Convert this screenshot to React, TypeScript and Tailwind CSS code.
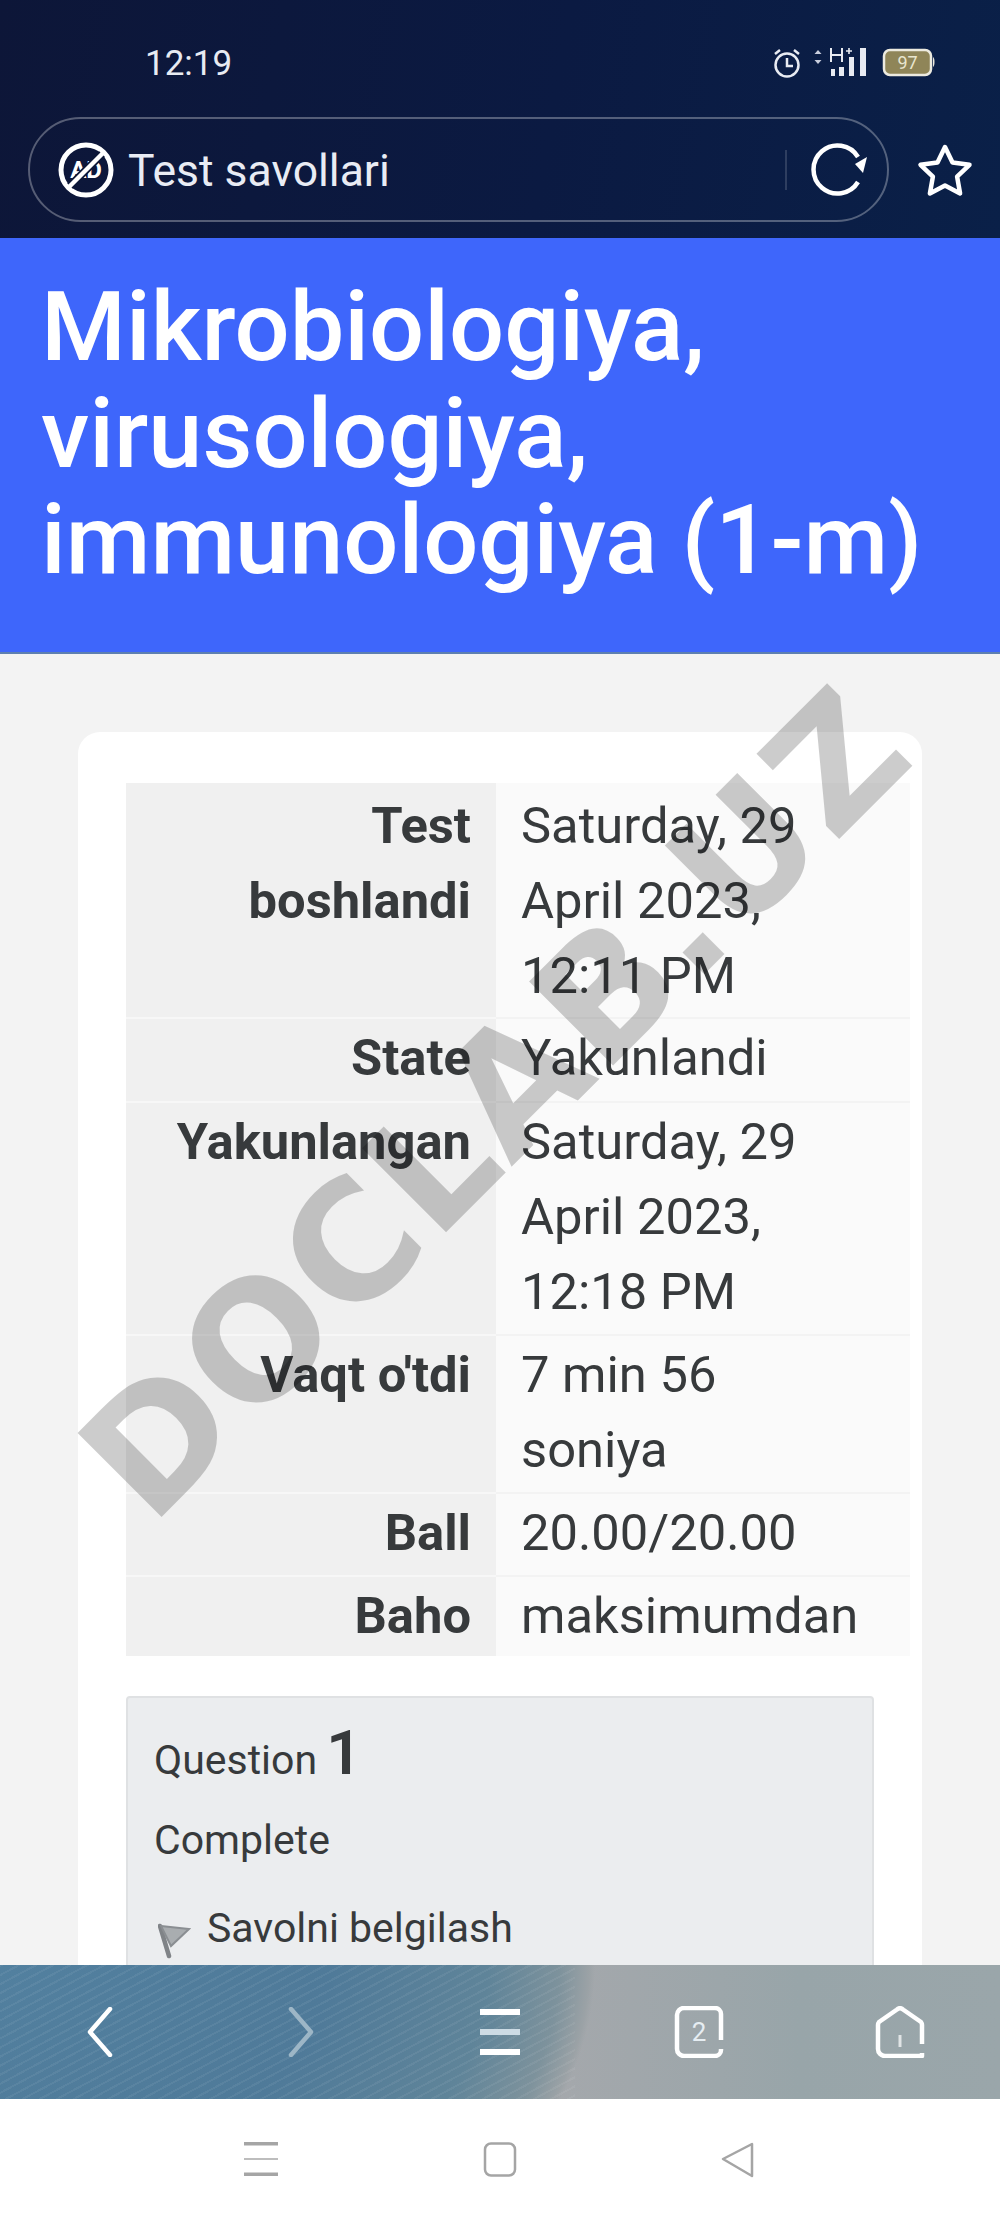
const rows = [
  { label: ['Test', 'boshlandi'], value: ['Saturday, 29', 'April 2023,', '12:11 PM'] },
  { label: ['State'], value: ['Yakunlandi'] },
  { label: ['Yakunlangan'], value: ['Saturday, 29', 'April 2023,', '12:18 PM'] },
  { label: ["Vaqt o'tdi"], value: ['7 min 56', 'soniya'] },
  { label: ['Ball'], value: ['20.00/20.00'] },
  { label: ['Baho'], value: ['maksimumdan'] },
];

function cellPadding(i: number) {
  if (i === 0) return 'pt-[5px] pb-[4px]';
  if (i === 1) return 'pt-[1px] pb-[6px] border-t-2';
  if (i === 2 || i === 3) return 'pt-[1px] pb-[5px] border-t-2';
  if (i === 4) return 'pt-[1px] pb-[5px] border-t-2';
  return 'pt-[1px] pb-[3px] border-t-2';
}

function StatusIcons() {
  return (
    <div className="relative w-[170px] h-[36px]">
      <svg width="170" height="36" viewBox="0 0 170 36" fill="none" className="block">
        {/* alarm */}
        <circle cx="16" cy="18" r="11.5" stroke="#e8ebf2" strokeWidth="2.5" />
        <path d="M16 11v8h6" stroke="#e8ebf2" strokeWidth="2.5" />
        <path d="M4 7l5-4M28 7l-5-4" stroke="#e8ebf2" strokeWidth="2.5" />
        {/* data arrows */}
        <path d="M47 3l3.5 4h-7zM47 17l3.5-4h-7z" fill="#c9cede" />
        {/* H+ */}
        <path d="M60 1v14M71 1v14M60 8h11" stroke="#e8ebf2" strokeWidth="2" />
        <path d="M75 4h6M78 1v6" stroke="#e8ebf2" strokeWidth="1.6" />
        {/* signal */}
        <path d="M60 22h4v7h-4zM68 20h5v9h-5zM78 10h5v19h-5zM89 1h6v28h-6z" fill="#e8ebf2" />
        {/* battery */}
        <rect x="113" y="3" width="47" height="25" rx="6" fill="#8f8558" stroke="#eceadf" strokeWidth="2.5" />
        <path d="M162 10c2 1 2 9 0 10z" fill="#eceadf" />
      </svg>
      <span className="absolute left-[113px] top-[3px] w-[47px] h-[25px] flex items-center justify-center text-[18px] leading-[25px] text-[#e9e6cf]">
        97
      </span>
    </div>
  );
}

function AdBlockIcon() {
  return (
    <div className="relative w-[56px] h-[56px]">
      <span className="absolute inset-0 flex items-center justify-center text-[24px] font-bold text-white">AD</span>
      <svg width="56" height="56" viewBox="0 0 56 56" fill="none" className="absolute inset-0 block">
        <circle cx="28" cy="28" r="25" stroke="#fff" strokeWidth="5" />
        <path d="M44 12L12 44" stroke="#0c1738" strokeWidth="8" />
        <path d="M46 10L10 46" stroke="#fff" strokeWidth="4.500" />
      </svg>
    </div>
  );
}

function ReloadIcon() {
  return (
    <svg width="62" height="54" viewBox="0 0 62 54" fill="none" className="block">
      <path d="M50 39A24 24 0 1 1 50 14" stroke="#fff" strokeWidth="4.500" />
      <path d="M47 21l12-7-4 16z" fill="#fff" />
    </svg>
  );
}

function StarIcon() {
  return (
    <svg width="56" height="54" viewBox="0 0 56 54" fill="none" className="block">
      <path d="M28 4l7.500 15.500 17 2.300-12.400 11.900 3 16.800L28 42.500l-15.100 8 3-16.800L3.500 21.800l17-2.300z" stroke="#fff" strokeWidth="4.500" strokeLinejoin="round" />
    </svg>
  );
}

function FlagIcon() {
  return (
    <svg width="34" height="36" viewBox="0 0 34 36" fill="none" className="block">
      <path d="M2 3l9 30" stroke="#7f8387" strokeWidth="4.500" strokeLinecap="round" />
      <path d="M3 3l28 3-18 17z" fill="#a9adb0" stroke="#8a8e92" strokeWidth="2" />
    </svg>
  );
}

function BottomBar() {
  return (
    <div className="h-[134px] shrink-0 flex items-center [background-repeat:no-repeat] [background-size:575px_100%,100%_100%,100%_100%] bg-[repeating-linear-gradient(152deg,rgba(255,255,255,0.06)_0px,rgba(255,255,255,0.06)_2px,transparent_2px,transparent_8px),radial-gradient(ellipse_595px_400px_at_0px_0px,#52809f_0%,#4f7a99_55%,#5f8499_82%,#7d929c_94%,#9ba2a6_99%,transparent_100%),linear-gradient(90deg,#a5a8ac_55%,#98a5a9_80%,#9aa6aa_100%)]">
      <div className="w-[200px] flex justify-center">
        <svg width="26" height="50" viewBox="0 0 26 50" fill="none" className="block">
          <path d="M23 2L3 25l20 23" stroke="#fff" strokeWidth="4.500" strokeLinecap="round" strokeLinejoin="round" />
        </svg>
      </div>
      <div className="w-[202px] flex justify-center">
        <svg width="26" height="50" viewBox="0 0 26 50" fill="none" className="block">
          <path d="M3 2l20 23L3 48" stroke="#9db6c6" strokeWidth="4.500" strokeLinecap="round" strokeLinejoin="round" />
        </svg>
      </div>
      <div className="w-[196px] flex justify-center">
        <svg width="42" height="46" viewBox="0 0 42 46" className="block">
          <path d="M1 0h40v6H1z" fill="#fff" />
          <path d="M1 20h40v6H1z" fill="#cddbe4" />
          <path d="M1 40h40v6H1z" fill="#fff" />
        </svg>
      </div>
      <div className="w-[202px] flex justify-center">
        <div className="relative w-[50px] h-[52px]">
          <svg width="50" height="52" viewBox="0 0 50 52" fill="none" className="block">
            <path d="M47 43v1a6 6 0 0 1-6 6H10a7 7 0 0 1-7-7V9a7 7 0 0 1 7-7h31a6 6 0 0 1 6 6v26" stroke="#fff" strokeWidth="4.500" />
          </svg>
          <span className="absolute inset-0 flex items-center justify-center text-[26px] text-[#e6edf2]">2</span>
        </div>
      </div>
      <div className="w-[200px] flex justify-center">
        <svg width="50" height="52" viewBox="0 0 50 52" fill="none" className="block">
          <path d="M47 38V19a5 5 0 0 0-1-3L28 3.500a4 4 0 0 0-6 0L4 16a5 5 0 0 0-1 3v24a7 7 0 0 0 7 7h37v-3" stroke="#fff" strokeWidth="4.500" strokeLinejoin="round" />
          <path d="M25 29v12" stroke="#fff" strokeWidth="3" opacity="0.7" />
        </svg>
      </div>
    </div>
  );
}

function SystemNav() {
  return (
    <div className="h-[123px] shrink-0 bg-white flex items-start pt-[43px] pl-[244px]">
      <svg width="34" height="34" viewBox="0 0 34 34" className="block">
        <path d="M0 0h34v3.500H0z" fill="#a5a5a5" />
        <path d="M0 16h34v2H0z" fill="#bdbdbd" />
        <path d="M0 30.500h34v3.500H0z" fill="#a5a5a5" />
      </svg>
      <svg width="34" height="35" viewBox="0 0 34 35" fill="none" className="block ml-[205px]">
        <rect x="2" y="1.500" width="30" height="32" rx="6" stroke="#a5a5a5" strokeWidth="2.500" />
      </svg>
      <svg width="34" height="36" viewBox="0 0 34 36" fill="none" className="block ml-[204px]">
        <path d="M31 2v32L2 17z" stroke="#a5a5a5" strokeWidth="2.500" strokeLinejoin="round" />
      </svg>
    </div>
  );
}

export default function App() {
  return (
    <div className="relative w-[1000px] h-[2222px] overflow-hidden flex flex-col font-['Roboto',sans-serif] bg-[#f3f3f3]">
      {/* phone + browser chrome */}
      <div className="h-[238px] shrink-0 bg-[linear-gradient(100deg,#0d1638_0%,#0b1a42_55%,#0a2048_100%)]">
        <div className="h-[117px] flex items-start pt-[46px] pl-[145px] pr-[59px] justify-between">
          <span className="text-[35px] leading-[36px] text-[#e8ebf2]">12:19</span>
          <div className="mt-[1px]">
            <StatusIcons />
          </div>
        </div>
        <div className="flex items-center pl-[28px]">
          <div className="w-[861px] h-[105px] rounded-full border-2 border-white/30 flex items-center pl-[28px] pr-[17px]">
            <AdBlockIcon />
            <span className="ml-[14px] text-[44.5px] leading-[56px] pt-[2px] text-[#e9ecf4] flex-1">Test savollari</span>
            <div className="w-[2px] h-[40px] bg-white/15" />
            <div className="ml-[21px]">
              <ReloadIcon />
            </div>
          </div>
          <div className="ml-[28px]">
            <StarIcon />
          </div>
        </div>
      </div>

      {/* page title */}
      <div className="h-[416px] shrink-0 bg-[#3e66fb] pl-[41px] pt-[36px] border-b-2 border-[#5d7fb0]">
        <h1 className="text-[97.2px] leading-[106.5px] font-medium text-white">
          Mikrobiologiya,
          <br />
          virusologiya,
          <br />
          immunologiya (1-m)
        </h1>
      </div>

      {/* page body */}
      <div className="flex-1 min-h-0 overflow-hidden pt-[78px] pl-[78px]">
        <div className="w-[844px] rounded-[22px] bg-white pt-[51px] pl-[48px] pb-[200px]">
          <table className="w-[784px] table-fixed border-collapse text-[50.7px] leading-[75px] text-[#373a3c]">
            <tbody>
              {rows.map((row, i) => (
                <tr key={i}>
                  <th className={`w-[370px] bg-[#f0f0f0] text-right font-bold align-top pr-[25px] border-[#f7f7f7] ${cellPadding(i)}`}>
                    {row.label.map((line) => (
                      <div key={line}>{line}</div>
                    ))}
                  </th>
                  <td className={`bg-[#fafafa] pl-[25px] align-top border-[#f3f3f3] ${cellPadding(i)}`}>
                    {row.value.map((line) => (
                      <div key={line}>{line}</div>
                    ))}
                  </td>
                </tr>
              ))}
            </tbody>
          </table>

          <div className="mt-[40px] w-[748px] h-[400px] rounded-[4px] bg-[#ebedef] border-2 border-[#dfe1e3] pl-[26px] pt-[15px] text-[#373a3c]">
            <div className="h-[80px] flex items-baseline text-[41px] leading-[80px]">
              Question
              <span className="ml-[9px] text-[62px] font-semibold">1</span>
            </div>
            <div className="text-[41px] leading-[60px] mt-[17px]">Complete</div>
            <div className="mt-[28px] flex items-start">
              <div className="mt-[25px] ml-[4px]">
                <FlagIcon />
              </div>
              <span className="ml-[15px] text-[41px] leading-[60px]">Savolni belgilash</span>
            </div>
          </div>
        </div>
      </div>

      <BottomBar />
      <SystemNav />

      {/* watermark across the page */}
      <div className="absolute left-[111px] top-[1406px] pointer-events-none origin-left -rotate-45 whitespace-nowrap font-['DejaVu_Sans',sans-serif] font-bold text-[163px] leading-[163px] tracking-[3px] text-black/20">
        DOCLAB.UZ
      </div>
    </div>
  );
}
